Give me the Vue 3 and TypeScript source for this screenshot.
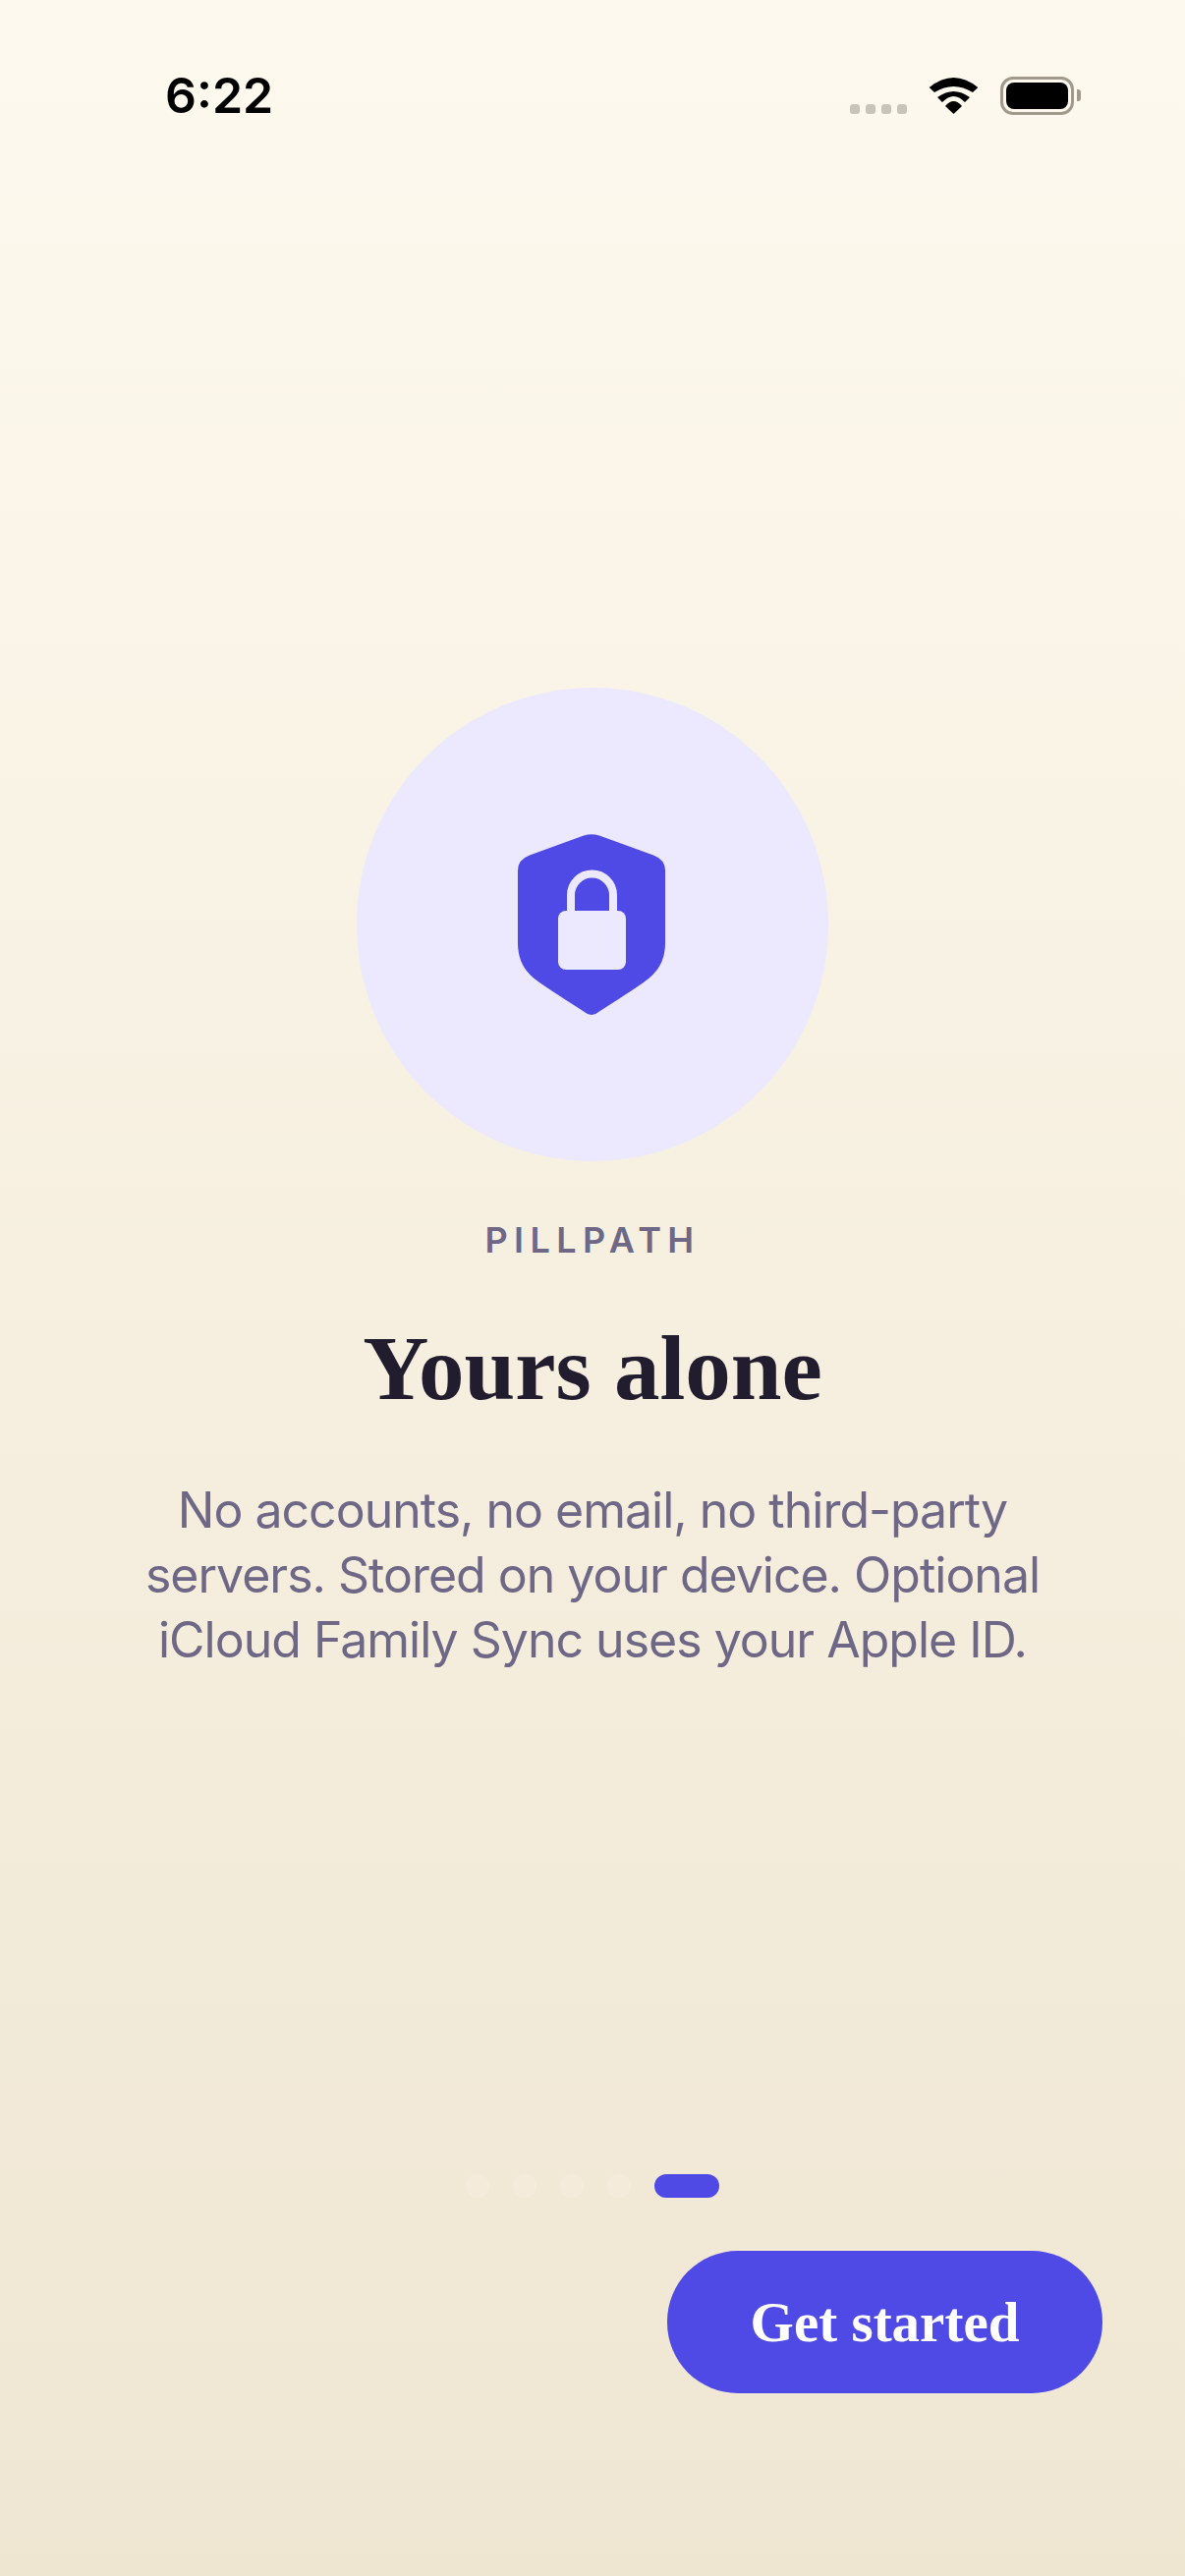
<script setup lang="ts">
const dots = [0, 1, 2, 3, 4];
const activeDot = 4;
</script>

<template>
  <div class="screen">
    <div class="status">
      <span class="time">6:22</span>
      <div class="status-icons">
        <div class="signal">
          <i v-for="n in 4" :key="n"></i>
        </div>
        <svg class="wifi" width="51" height="38" viewBox="0 0 51 38">
          <path d="M.7 11Q25.5-9 50.3 11L45 16Q25.5 4 6 16Z" />
          <path d="M9 21Q25.5 9 42 21L37 26Q25.5 14 14 26Z" />
          <path d="M17 30Q25.5 20 34 30L25.5 38Z" />
        </svg>
        <div class="battery">
          <div class="battery-level"></div>
        </div>
        <div class="battery-cap"></div>
      </div>
    </div>

    <main class="hero">
      <div class="badge">
        <svg class="shield" width="150" height="184" viewBox="0 0 150 184">
          <path
            fill="#4f49e6"
            d="M67 1.5Q75-1 83 1.5L138 21.5Q150 26 150 37V110C150 130 142 141 128 151C115 160 98 171 83 180.5Q75 187.5 67 180.5C52 171 35 160 22 151C8 141 0 130 0 110V37Q0 26 12 21.5Z"
          />
          <path fill="none" stroke="#ece9fe" stroke-width="8" d="M54 82V62a21.5 21.5 0 0 1 43 0V82" />
          <rect x="41" y="78" width="69" height="60" rx="8" fill="#ece9fe" />
        </svg>
      </div>
      <p class="eyebrow">PILLPATH</p>
      <h1 class="title">Yours alone</h1>
      <p class="copy">
        No accounts, no email, no third-party<br />
        servers. Stored on your device. Optional<br />
        iCloud Family Sync uses your Apple ID.
      </p>
    </main>

    <div class="pager">
      <span v-for="d in dots" :key="d" class="dot" :class="{ active: d === activeDot }"></span>
    </div>

    <div class="actions">
      <button class="cta">Get started</button>
    </div>
  </div>
</template>

<style>
html,
body {
  margin: 0;
  padding: 0;
}
</style>

<style scoped>
.screen {
  width: 1206px;
  height: 2622px;
  display: flex;
  flex-direction: column;
  overflow: hidden;
  background: linear-gradient(180deg, #fdf9ee 0%, #efe6d2 100%);
  font-family: Inter, "Liberation Sans", sans-serif;
}

.status {
  height: 130px;
  box-sizing: border-box;
  padding: 67px 106px 0 168px;
  display: flex;
  justify-content: space-between;
  align-items: flex-start;
}

.time {
  font-size: 50px;
  line-height: 60px;
  font-weight: 600;
  color: #000;
}

.status-icons {
  display: flex;
  align-items: flex-start;
  margin-top: 11px;
}

.signal {
  display: flex;
  gap: 6px;
  margin: 28px 22px 0 0;
}

.signal i {
  width: 10px;
  height: 10px;
  border-radius: 3px;
  background: #c9c4b8;
}

.wifi {
  fill: #000;
  margin-right: 22px;
}

.battery {
  width: 75px;
  height: 39px;
  box-sizing: border-box;
  border: 3px solid #a09a8c;
  border-radius: 13px;
  padding: 3px;
}

.battery-level {
  height: 100%;
  background: #000;
  border-radius: 8px;
}

.battery-cap {
  width: 4px;
  height: 12px;
  margin: 13px 0 0 3px;
  background: #a09a8c;
  border-radius: 0 3px 3px 0;
}

.hero {
  margin-top: 570px;
  display: flex;
  flex-direction: column;
  align-items: center;
}

.badge {
  width: 480px;
  height: 482px;
  border-radius: 50%;
  background: #ece9fe;
  display: flex;
  align-items: center;
  justify-content: center;
}

.shield {
  margin-right: 2px;
}

.eyebrow {
  margin: 60px 0 0;
  font-size: 36px;
  line-height: 40px;
  font-weight: 600;
  letter-spacing: 6.4px;
  color: #6e6786;
}

.title {
  margin: 61px 0 0;
  font-family: "Liberation Serif", serif;
  font-size: 93px;
  line-height: 100px;
  font-weight: 700;
  color: #211c2e;
}

.copy {
  margin: 61px 0 0;
  font-size: 50px;
  line-height: 66px;
  letter-spacing: -1px;
  text-align: center;
  color: #6e6786;
}

.pager {
  margin-top: auto;
  display: flex;
  justify-content: center;
  gap: 24px;
}

.dot {
  width: 24px;
  height: 24px;
  border-radius: 12px;
  background: #f5ebdb;
}

.dot.active {
  width: 66px;
  background: #4f49e6;
}

.actions {
  margin-top: 54px;
  padding: 0 84px 186px 0;
  display: flex;
  justify-content: flex-end;
}

.cta {
  width: 443px;
  height: 145px;
  border: 0;
  border-radius: 72px;
  background: #4f49e6;
  color: #fff;
  font-family: "Liberation Serif", serif;
  font-size: 57px;
  font-weight: 700;
}
</style>
